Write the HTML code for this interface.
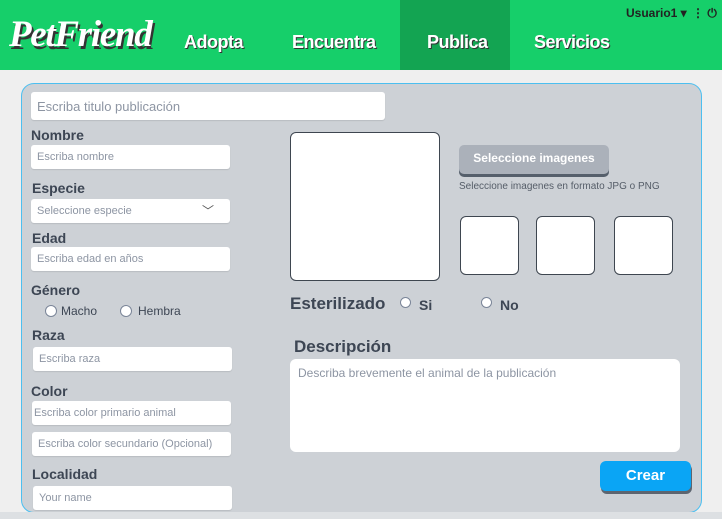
<!DOCTYPE html>
<html><head><meta charset="utf-8"><style>
*{margin:0;padding:0;box-sizing:border-box}
body{width:722px;height:519px;overflow:hidden;background:#efefef;font-family:"Liberation Sans",sans-serif;position:relative}
.a{position:absolute}
.hdr{left:0;top:0;width:722px;height:70px;background:#16cf6a}
.act{left:400px;top:0;width:110px;height:70px;background:#13a452}
.nav{top:32px;color:#fff;font-weight:bold;font-size:18px;text-shadow:1px 1px 0 #333;letter-spacing:-0.5px}
.logo{left:9px;top:13px;font-family:"Liberation Serif",serif;font-style:italic;font-weight:bold;font-size:37px;color:#fff;text-shadow:2px 3px 0 #333;letter-spacing:-1.3px}
.card{left:21px;top:83px;width:681px;height:430px;background:#cdd1d6;border:1px solid #4cbff0;border-radius:13px}
.strip{left:0;top:512px;width:722px;height:7px;background:#dde0e3}
.in{background:#fff;border-radius:3px;color:#8d95a3;font-size:11px;padding-left:6px;display:flex;align-items:center;box-shadow:0 1px 1px rgba(0,0,0,.1)}
.lb{color:#3d4654;font-weight:bold;font-size:14px}
.box{background:#fff;border:1px solid #3e4650;border-radius:6px}
.rd{width:12px;height:12px;border-radius:50%;background:#fff;border:1px solid #7a8598}
.t{color:#3d4654;font-size:12px}
</style></head><body>
<div class="a hdr"></div>
<div class="a act"></div>
<div class="a logo">PetFriend</div>
<div class="a nav" style="left:184px">Adopta</div>
<div class="a nav" style="left:292px">Encuentra</div>
<div class="a nav" style="left:427px">Publica</div>
<div class="a nav" style="left:534px">Servicios</div>
<div class="a" style="left:626px;top:6px;font-size:12px;font-weight:bold;color:#222">Usuario1 ▾ <span style="margin-left:2px">⋮</span> ⏻</div>
<div class="a card"></div>
<div class="a strip"></div>
<div class="a in" style="left:31px;top:92px;width:354px;height:28px;font-size:13px">Escriba titulo publicación</div>
<div class="a lb" style="left:31px;top:127px">Nombre</div>
<div class="a in" style="left:31px;top:145px;width:199px;height:24px">Escriba nombre</div>
<div class="a lb" style="left:32px;top:180px">Especie</div>
<div class="a in" style="left:31px;top:199px;width:199px;height:24px">Seleccione especie<span style="position:absolute;left:171px;top:3px;color:#555;font-size:12px">﹀</span></div>
<div class="a lb" style="left:32px;top:230px">Edad</div>
<div class="a in" style="left:31px;top:247px;width:199px;height:24px">Escriba edad en años</div>
<div class="a lb" style="left:31px;top:282px">Género</div>
<div class="a rd" style="left:45px;top:305px"></div><div class="a t" style="left:61px;top:304px">Macho</div>
<div class="a rd" style="left:120px;top:305px"></div><div class="a t" style="left:138px;top:304px">Hembra</div>
<div class="a lb" style="left:32px;top:327px">Raza</div>
<div class="a in" style="left:33px;top:347px;width:199px;height:24px">Escriba raza</div>
<div class="a lb" style="left:31px;top:383px">Color</div>
<div class="a in" style="left:32px;top:401px;width:199px;height:24px;padding-left:2px">Escriba color primario animal</div>
<div class="a in" style="left:32px;top:432px;width:199px;height:24px">Escriba color secundario (Opcional)</div>
<div class="a lb" style="left:32px;top:466px">Localidad</div>
<div class="a in" style="left:33px;top:486px;width:199px;height:24px">Your name</div>
<div class="a box" style="left:290px;top:132px;width:150px;height:149px"></div>
<div class="a" style="left:459px;top:145px;width:150px;height:29px;background:#abb1ba;border-radius:5px;box-shadow:0 3px 0 #555f6b;color:#fff;font-weight:bold;font-size:12px;text-align:center;line-height:27px">Seleccione imagenes</div>
<div class="a" style="left:459px;top:181px;font-size:10px;color:#555d68">Seleccione imagenes en formato JPG o PNG</div>
<div class="a box" style="left:460px;top:216px;width:59px;height:59px"></div>
<div class="a box" style="left:536px;top:216px;width:59px;height:59px"></div>
<div class="a box" style="left:614px;top:216px;width:59px;height:59px"></div>
<div class="a lb" style="left:290px;top:294px;font-size:17px">Esterilizado</div>
<div class="a rd" style="left:400px;top:297px;width:11px;height:11px"></div><div class="a lb" style="left:419px;top:297px;font-size:14px">Si</div>
<div class="a rd" style="left:481px;top:297px;width:11px;height:11px"></div><div class="a lb" style="left:500px;top:297px;font-size:14px">No</div>
<div class="a lb" style="left:294px;top:337px;font-size:17px">Descripción</div>
<div class="a" style="left:290px;top:359px;width:390px;height:93px;background:#fff;border-radius:6px;color:#8d95a3;font-size:12px;padding:7px 8px">Describa brevemente el animal de la publicación</div>
<div class="a" style="left:600px;top:461px;width:91px;height:30px;background:#0aa5f5;border-radius:6px;box-shadow:1px 3px 0 #5d6570;color:#fff;font-weight:bold;font-size:15px;text-align:center;line-height:30px">Crear</div>
</body></html>
